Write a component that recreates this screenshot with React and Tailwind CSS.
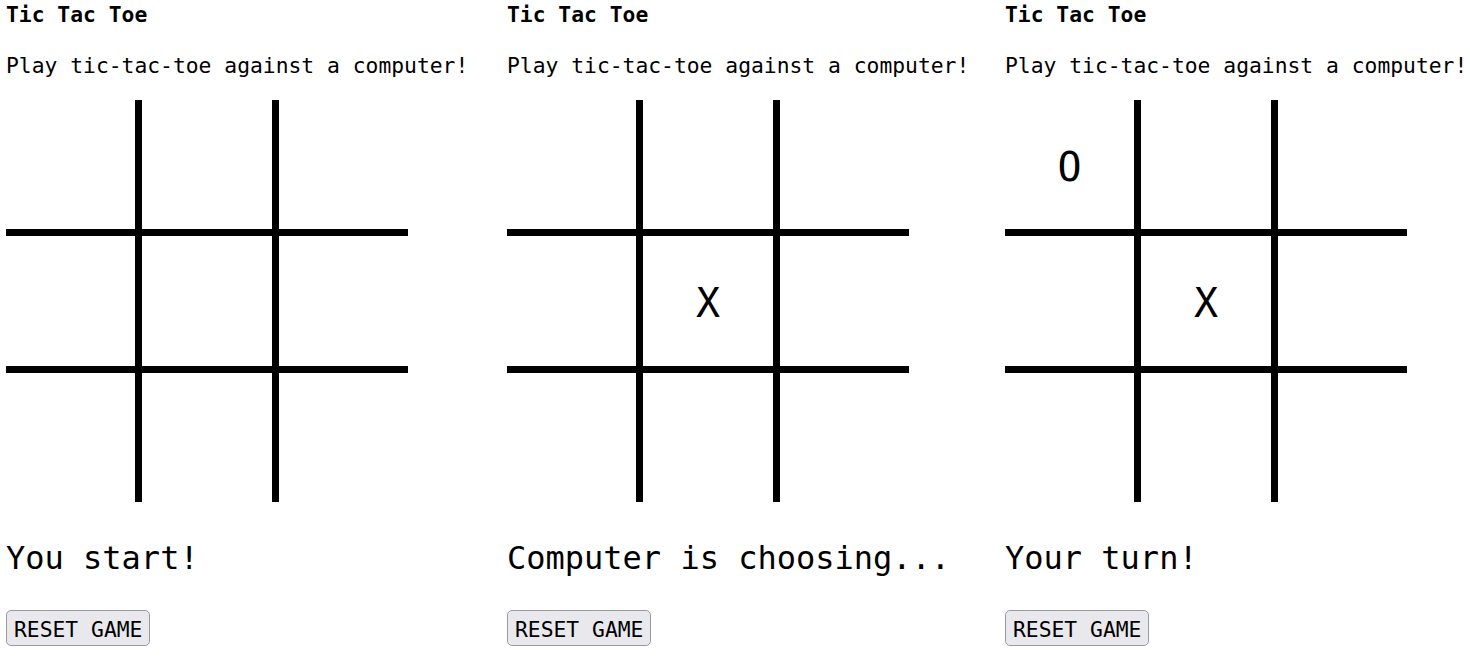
import React from "react";

function Board({ cells }) {
  return (
    <div className="mt-[21px] grid h-[402px] w-[402px] grid-cols-3 grid-rows-3 gap-[7px] bg-black">
      {cells.map((c, i) => (
        <div key={i} className="flex items-center justify-center bg-white pt-[5px] text-[40px] leading-none text-black">
          {c}
        </div>
      ))}
    </div>
  );
}

function Game({ cells, status }) {
  return (
    <div className="flex flex-col items-start">
      <div className="mt-[2px] text-[21.33px] font-bold leading-[26px]">Tic Tac Toe</div>
      <p className="mt-[25px] text-[21.33px] leading-[26px] whitespace-nowrap">Play tic-tac-toe against a computer!</p>
      <Board cells={cells} />
      <div className="mt-[36px] text-[32px] leading-[40px] whitespace-nowrap">{status}</div>
      <button className="mt-[32px] flex h-[36px] items-center rounded-[5px] border border-[#9a9aa6] bg-[#e9e9ed] px-[7px] pt-[4px] text-[21.33px] leading-[26px] text-black">
        RESET GAME
      </button>
    </div>
  );
}

export default function App() {
  const e = ["", "", "", "", "", "", "", "", ""];
  const b2 = ["", "", "", "", "X", "", "", "", ""];
  const b3 = ["O", "", "", "", "X", "", "", "", ""];
  return (
    <div
      className="grid min-h-[657px] w-[1470px] grid-cols-[501px_498px_1fr] bg-white pl-[6px] text-black"
      style={{ fontFamily: '"DejaVu Sans Mono", monospace' }}
    >
      <Game cells={e} status="You start!" />
      <Game cells={b2} status="Computer is choosing..." />
      <Game cells={b3} status="Your turn!" />
    </div>
  );
}
